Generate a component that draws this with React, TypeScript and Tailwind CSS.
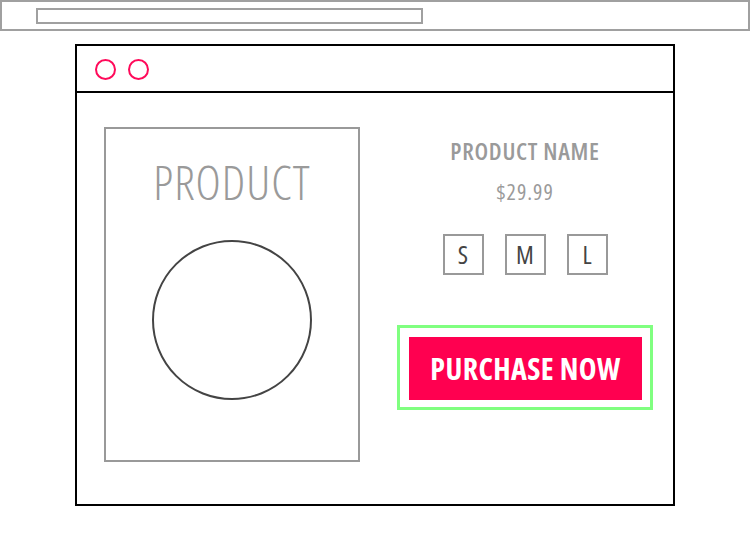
import React from 'react'

const font = { fontFamily: '"Open Sans", "DejaVu Sans", sans-serif', fontStretch: '75%' }

const SIZES = ['S', 'M', 'L']

export default function App() {
  return (
    <div className="w-[750px] h-[550px] bg-white" style={font}>
      {/* browser address bar */}
      <div className="h-[31px] border-2 border-[#a0a0a0] pl-[34px] pt-[6px]">
        <div className="w-[387px] h-[16px] border-2 border-[#a0a0a0]" />
      </div>

      {/* window */}
      <div className="mt-[13px] ml-[75px] w-[600px] h-[462px] border-2 border-black flex flex-col">
        <div className="h-[47px] border-b-2 border-black flex items-center gap-[12px] pl-[18px] pt-[1px] shrink-0">
          <div className="w-[21px] h-[21px] rounded-full border-2 border-[#ff0a5a]" />
          <div className="w-[21px] h-[21px] rounded-full border-2 border-[#ff0a5a]" />
        </div>

        <div className="flex items-start pl-[27px] pt-[34px]">
          {/* product card */}
          <div className="w-[256px] h-[335px] border-2 border-[#999] flex flex-col items-center">
            <div className="mt-[27px] text-[48px] leading-[52px] font-light text-[#9a9a9a] tracking-[1px]">PRODUCT</div>
            <div className="mt-[32px] w-[160px] h-[160px] rounded-full border-2 border-[#444]" />
          </div>

          {/* details */}
          <div className="ml-[37px] w-[256px] flex flex-col items-center">
            <div className="mt-[8px] text-[24px] leading-[32px] font-semibold text-[#9a9a9a] tracking-[0.7px]">PRODUCT NAME</div>
            <div className="mt-[9px] text-[22px] leading-[30px] font-normal text-[#9a9a9a] tracking-[1px]">$29.99</div>
            <div className="mt-[28px] flex gap-[21px]">
              {SIZES.map(s => (
                <div key={s} className="w-[41px] h-[41px] border-2 border-[#999] flex items-center justify-center text-[25px] font-medium text-[#444]">
                  {s}
                </div>
              ))}
            </div>
            <div className="mt-[50px] w-[256px] h-[85px] border-[3px] border-[#80ff80] pl-[9px] pt-[9px]">
              <button className="w-[233px] h-[63px] bg-[#ff0050] text-white text-[30px] font-bold tracking-[0.4px] flex items-center justify-center">
                PURCHASE NOW
              </button>
            </div>
          </div>
        </div>
      </div>
    </div>
  )
}
